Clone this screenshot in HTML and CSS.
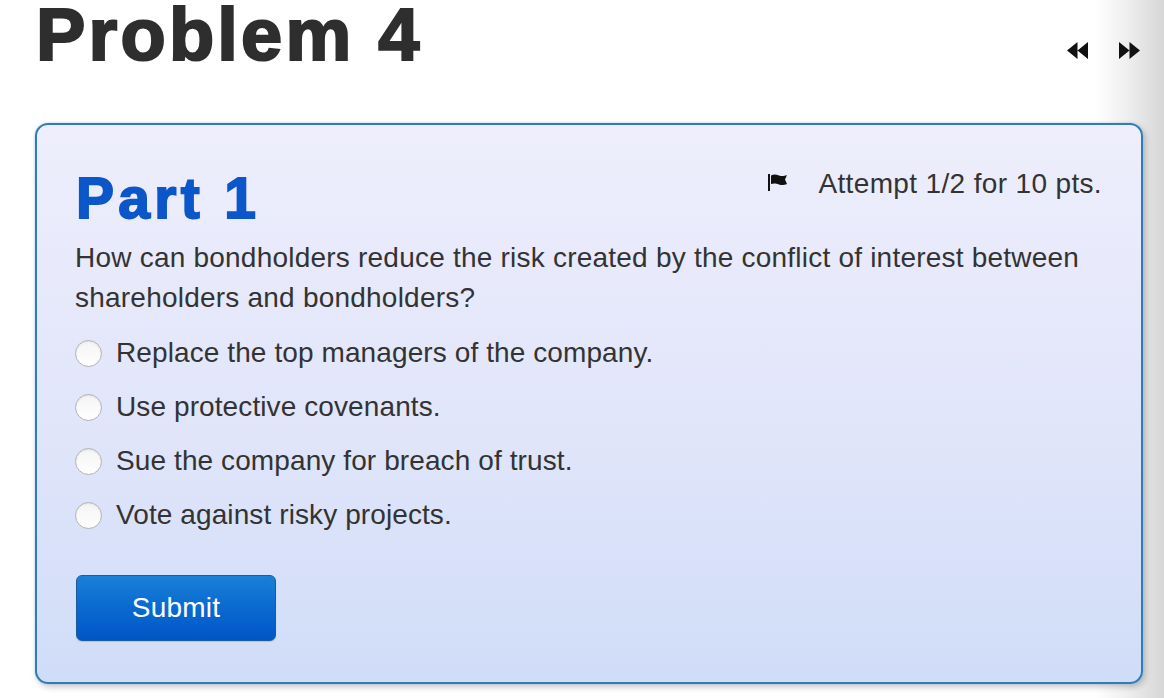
FILE: index.html
```html
<!DOCTYPE html>
<html>
<head>
<meta charset="utf-8">
<link rel="stylesheet" href="styles.css">
</head>
<body>
<div class="page">
  <header class="top">
    <h1 class="title">Problem 4</h1>
    <nav class="nav">
      <svg class="arrow" width="21" height="17" viewBox="0 0 21 17"><path d="M0 8.5 L10.5 0 V17 Z M10.5 8.5 L21 0 V17 Z" fill="#111"/></svg>
      <svg class="arrow" width="21" height="17" viewBox="0 0 21 17"><path d="M21 8.5 L10.5 0 V17 Z M10.5 8.5 L0 0 V17 Z" fill="#111"/></svg>
    </nav>
  </header>
  <section class="card">
    <div class="part-row">
      <h2 class="part">Part 1</h2>
      <div class="attempt">
        <svg class="flag" width="20" height="17" viewBox="0 0 20 17"><rect x="0" y="0" width="2" height="17" fill="#111"/><path d="M3 1.5 C6 0 8 0.5 11 1.5 C14 2.5 16 2 19 1 L17 5.5 L19 10 C16 11 14 11.5 11 10.5 C8 9.5 6 9 3 10 Z" fill="#111"/></svg>
        <span>Attempt 1/2 for 10 pts.</span>
      </div>
    </div>
    <p class="question">How can bondholders reduce the risk created by the conflict of interest between shareholders and bondholders?</p>
    <ul class="options">
      <li class="option"><span class="radio"></span><span>Replace the top managers of the company.</span></li>
      <li class="option"><span class="radio"></span><span>Use protective covenants.</span></li>
      <li class="option"><span class="radio"></span><span>Sue the company for breach of trust.</span></li>
      <li class="option"><span class="radio"></span><span>Vote against risky projects.</span></li>
    </ul>
    <button class="submit">Submit</button>
  </section>
</div>
</body>
</html>
```

FILE: styles.css
```css
html, body {
  margin: 0;
  padding: 0;
  height: 100%;
}
body {
  font-family: "Liberation Sans", Arial, sans-serif;
  color: #333;
  background: linear-gradient(to right, #ffffff 0, #ffffff 1095px, #f0f0f0 1125px, #d6d6d6 1164px);
  overflow: hidden;
}
.page {
  width: 1164px;
  height: 698px;
}
.top {
  display: flex;
  justify-content: space-between;
  align-items: flex-start;
  height: 70px;
  padding-left: 36px;
  padding-right: 24px;
}
.title {
  margin: 0;
  font-size: 74px;
  line-height: 76px;
  margin-top: -3px;
  margin-bottom: -3px;
  font-weight: 700;
  letter-spacing: 3.2px;
  color: #2e2e2e;
  -webkit-text-stroke: 2.2px #2e2e2e;
}
.nav {
  display: flex;
  gap: 31px;
  padding-top: 42px;
}
.arrow {
  display: block;
}
.card {
  margin-top: 53px;
  margin-left: 35px;
  width: 1108px;
  height: 561px;
  box-sizing: border-box;
  border: 2px solid #2f7cb8;
  border-radius: 13px;
  background: linear-gradient(to bottom, #eeeefc 0%, #e2e6fa 50%, #d0ddf8 100%);
  box-shadow: 0 0 2px rgba(120, 180, 230, 0.6), 2px 3px 6px rgba(0, 0, 0, 0.22);
  padding: 41px 39px 41px 38px;
}
.part-row {
  display: flex;
  justify-content: space-between;
  align-items: flex-start;
}
.part {
  margin: 0 0 0 1px;
  font-size: 57px;
  line-height: 64px;
  font-weight: 700;
  letter-spacing: 4.3px;
  color: #0b56c8;
  -webkit-text-stroke: 1.8px #0b56c8;
}
.attempt {
  display: flex;
  align-items: center;
  gap: 30px;
  margin-top: -2px;
  font-size: 28px;
  line-height: 40px;
  letter-spacing: 0.35px;
}
.flag {
  display: block;
  margin-top: -4px;
}
.question {
  margin: 8px 0 0 0;
  font-size: 28px;
  line-height: 40px;
  letter-spacing: 0.22px;
}
.options {
  list-style: none;
  margin: 8px 0 0 0;
  padding: 0;
}
.option {
  display: flex;
  align-items: center;
  gap: 14px;
  height: 54px;
  font-size: 28px;
  letter-spacing: 0.1px;
}
.radio {
  width: 27px;
  height: 27px;
  box-sizing: border-box;
  border-radius: 50%;
  border: 1px solid #b4b4b4;
  background: linear-gradient(to bottom, #f4f4f4, #ffffff);
  box-shadow: inset 0 1px 2px rgba(0, 0, 0, 0.08);
  flex: none;
}
.submit {
  display: block;
  margin: 33px 0 0 1px;
  width: 200px;
  height: 66px;
  border: 1px solid #1d5c9c;
  border-radius: 6px;
  background: linear-gradient(to bottom, #1a80d8 0%, #0a69d0 50%, #0056c6 100%);
  color: #fff;
  font-family: "Liberation Sans", Arial, sans-serif;
  font-size: 28px;
  letter-spacing: 0.2px;
  padding: 0;
  box-shadow: 0 1px 1px rgba(0, 0, 0, 0.15);
}
```
